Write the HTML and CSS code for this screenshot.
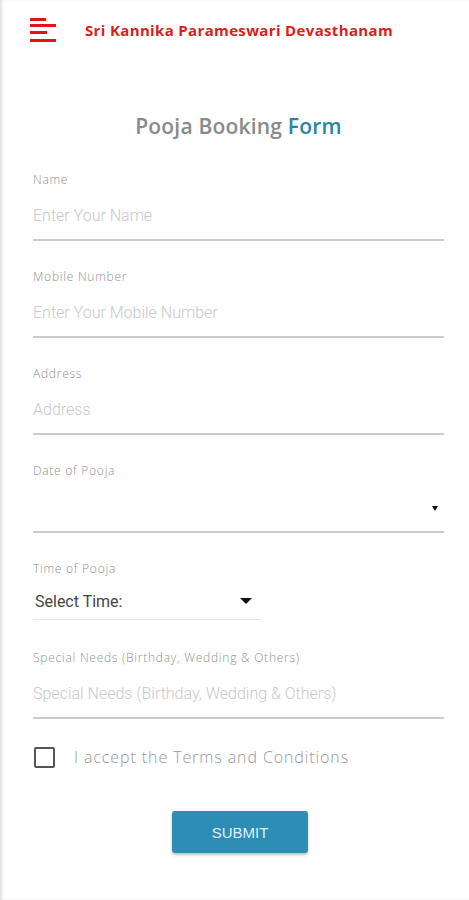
FILE: index.html
```html
<!DOCTYPE html>
<html lang="en">
<head>
    <meta charset="UTF-8">
    <meta name="viewport" content="width=device-width, initial-scale=1.0">
    <title>Pooja Booking</title>
    <link rel="stylesheet" href="styles.css">
</head>
<body>
    <div class="page">
        <header class="topbar">
            <svg class="menu" width="26" height="26" viewBox="0 0 26 26">
                <rect x="0" y="1" width="16" height="3" fill="#e0141b"/>
                <rect x="0" y="7" width="26" height="3" fill="#e0141b"/>
                <rect x="0" y="14" width="17" height="3" fill="#e0141b"/>
                <rect x="0" y="22" width="26" height="3" fill="#e0141b"/>
            </svg>
            <span class="brand">Sri Kannika Parameswari Devasthanam</span>
        </header>

        <form class="form">
            <h1 class="form-title">Pooja Booking <span>Form</span></h1>

            <div class="field">
                <label>Name</label>
                <input type="text" placeholder="Enter Your Name">
            </div>
            <div class="field">
                <label>Mobile Number</label>
                <input type="text" placeholder="Enter Your Mobile Number">
            </div>
            <div class="field">
                <label>Address</label>
                <input type="text" placeholder="Address">
            </div>
            <div class="field">
                <label>Date of Pooja</label>
                <div class="date-box"><span class="tiny-caret"></span></div>
            </div>
            <div class="field time">
                <label>Time of Pooja</label>
                <div class="select-box">
                    <span>Select Time:</span>
                    <span class="caret"></span>
                </div>
            </div>
            <div class="field">
                <label>Special Needs (Birthday, Wedding &amp; Others)</label>
                <input type="text" placeholder="Special Needs (Birthday, Wedding &amp; Others)">
            </div>

            <div class="terms">
                <span class="check"></span>
                <span>I accept the Terms and Conditions</span>
            </div>

            <div class="actions">
                <button type="button" class="submit">SUBMIT</button>
            </div>
        </form>
    </div>
</body>
</html>
```

FILE: styles.css
```css
html, body {
    margin: 0;
    padding: 0;
    background: #ffffff;
}
body {
    font-family: "Open Sans", Lato, sans-serif;
}
.page {
    min-height: 900px;
    box-shadow: inset 3px 0 3px -1px rgba(0, 0, 0, 0.12);
}
.topbar {
    height: 62px;
    display: flex;
    align-items: center;
    padding-left: 30px;
    box-sizing: border-box;
}
.topbar .menu {
    margin-top: -2px;
}
.brand {
    margin-left: 29px;
    margin-top: -2px;
    font-weight: 700;
    font-size: 15px;
    color: #de1c1c;
    letter-spacing: 0.35px;
}
.form {
    padding: 0 25px 0 33px;
}
.form-title {
    margin: 50px 0 32px;
    text-align: center;
    font-size: 21px;
    font-weight: 600;
    color: #8a8a8a;
    letter-spacing: 0.2px;
}
.form-title span {
    color: #2b84a2;
}
.field {
    display: flex;
    flex-direction: column;
    margin-bottom: 28px;
}
.field label {
    font-size: 12px;
    font-weight: 300;
    color: #8f8f8f;
    height: 16px;
    line-height: 16px;
    letter-spacing: 0.75px;
}
.field input {
    border: none;
    border-bottom: 2px solid #cccccc;
    padding: 18px 0 15px;
    height: 18px;
    font-family: Roboto, sans-serif;
    font-size: 16px;
    font-weight: 300;
    color: #444;
    outline: none;
}
.field input::placeholder {
    color: #c9c9c9;
}
.date-box {
    height: 52px;
    border-bottom: 2px solid #cccccc;
    display: flex;
    align-items: center;
    justify-content: flex-end;
    padding-right: 6px;
}
.tiny-caret {
    width: 0;
    height: 0;
    border-left: 3px solid transparent;
    border-right: 3px solid transparent;
    border-top: 5px solid #111;
    margin-top: 6px;
}
.field.time {
    margin-bottom: 30px;
}
.select-box {
    width: 229px;
    height: 43px;
    border-bottom: 1px solid #e6e6e6;
    display: flex;
    align-items: center;
    justify-content: space-between;
    box-sizing: border-box;
    padding: 6px 10px 0 2px;
    font-family: Roboto, sans-serif;
    font-size: 16px;
    color: #444;
}
.caret {
    width: 0;
    height: 0;
    border-left: 6px solid transparent;
    border-right: 6px solid transparent;
    border-top: 6px solid #111;
}
.terms {
    display: flex;
    align-items: center;
    height: 20px;
    margin-top: 0;
    font-size: 16px;
    font-weight: 300;
    color: #9a9a9a;
    letter-spacing: 0.9px;
}
.check {
    width: 17px;
    height: 17px;
    border: 2px solid #555;
    border-radius: 2px;
    margin: 0 19px 0 1px;
}
.actions {
    display: flex;
    justify-content: center;
    margin-top: 44px;
    padding-left: 3px;
}
.submit {
    width: 136px;
    height: 42px;
    border: none;
    border-radius: 3px;
    background: #2e8db4;
    color: #dcf0f8;
    font-family: "Liberation Sans", Arial, sans-serif;
    font-size: 15px;
    box-shadow: 0 2px 3px rgba(0, 0, 0, 0.25);
}
```
